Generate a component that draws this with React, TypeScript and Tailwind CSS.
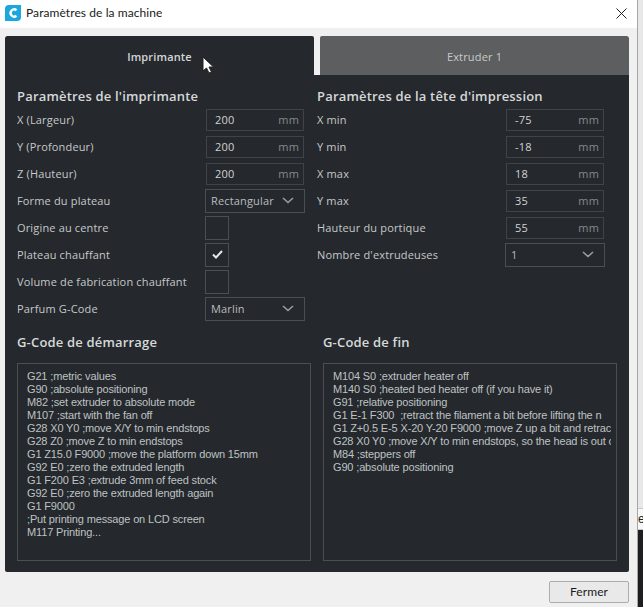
const Field = ({ label, value }: { label: string; value: string }) => (
  <div className="flex h-[27px] items-center justify-between">
    <span className="pt-[2px] text-[11px] tracking-[0.16px] text-[#c6c8c9]">{label}</span>
    <div className="mr-[1px] flex h-[22px] w-[98px] items-center justify-between border border-[#3f4447] pl-[8px] pr-[4px] pt-[2px] text-[11px] tracking-[0.16px]">
      <span className="text-[#d0d2d3]">{value}</span>
      <span className="text-[#85898b]">mm</span>
    </div>
  </div>
);

const Select = ({ label, value }: { label: string; value: string }) => (
  <div className="flex h-[27px] items-center justify-between">
    <span className="pt-[2px] text-[11px] tracking-[0.16px] text-[#c6c8c9]">{label}</span>
    <div className="flex h-[24px] w-[100px] items-center justify-between border border-[#4a4f52] pl-[5px] pr-[10px] text-[11px] tracking-[0.16px] text-[#b9bbbc]">
      <span className="pt-[2px]">{value}</span>
      <svg width="12" height="7" viewBox="0 0 12 7" fill="none" stroke="#9a9d9f" strokeWidth="1.6">
        <path d="M1 1l5 4.5L11 1" />
      </svg>
    </div>
  </div>
);

const Check = ({ label, checked }: { label: string; checked?: boolean }) => (
  <div className="flex h-[27px] items-center justify-between">
    <span className="pt-[2px] text-[11px] tracking-[0.16px] text-[#c6c8c9]">{label}</span>
    <div className="mr-[76px] flex h-[24px] w-[24px] items-center justify-center border border-[#4a4f52]">
      {checked && (
        <svg width="11" height="9" viewBox="0 0 11 9" fill="none" stroke="#e6e7e8" strokeWidth="2">
          <path d="M1 4.5l3 3L10 1" />
        </svg>
      )}
    </div>
  </div>
);

const startCode = [
  "G21 ;metric values",
  "G90 ;absolute positioning",
  "M82 ;set extruder to absolute mode",
  "M107 ;start with the fan off",
  "G28 X0 Y0 ;move X/Y to min endstops",
  "G28 Z0 ;move Z to min endstops",
  "G1 Z15.0 F9000 ;move the platform down 15mm",
  "G92 E0 ;zero the extruded length",
  "G1 F200 E3 ;extrude 3mm of feed stock",
  "G92 E0 ;zero the extruded length again",
  "G1 F9000",
  ";Put printing message on LCD screen",
  "M117 Printing...",
];

const endCode = [
  "M104 S0 ;extruder heater off",
  "M140 S0 ;heated bed heater off (if you have it)",
  "G91 ;relative positioning",
  "G1 E-1 F300  ;retract the filament a bit before lifting the n",
  "G1 Z+0.5 E-5 X-20 Y-20 F9000 ;move Z up a bit and retrac",
  "G28 X0 Y0 ;move X/Y to min endstops, so the head is out o",
  "M84 ;steppers off",
  "G90 ;absolute positioning",
];

const CodeBox = ({ lines }: { lines: string[] }) => (
  <div className="h-[198px] border border-[#4a4f52] pl-[9px] pr-[5px] pt-[6px]">
    <div className="h-full overflow-hidden">
      {lines.map((l) => (
        <div key={l} className="h-[13px] whitespace-pre font-['Liberation_Sans',sans-serif] text-[11px] leading-[13px] tracking-[-0.15px] text-[#bfc2c3]">
          {l}
        </div>
      ))}
    </div>
  </div>
);

export default function App() {
  return (
    <div className="flex h-[607px] w-[643px] overflow-hidden bg-[#f0f0f0] font-['Open_Sans',sans-serif]">
      <div className="flex h-full w-[637px] shrink-0 flex-col bg-[#f0f0f0]">
        <div className="flex h-[28px] shrink-0 items-center justify-between bg-white pb-[2px] pl-[5px] pr-[10px]">
          <div className="flex items-center gap-[5px]">
            <svg width="16" height="16" viewBox="0 0 16 16">
              <path d="M4 0h12v12a4 4 0 0 1-4 4H0V4a4 4 0 0 1 4-4z" fill="#1ba6dd" />
              <path d="M11.5 5.2A3.6 3.6 0 1 0 11.5 10.8" fill="none" stroke="#fff" strokeWidth="2.4" />
            </svg>
            <span className="font-['Lato',sans-serif] text-[12px] tracking-[0.08px] text-[#1a1a1a]">Paramètres de la machine</span>
          </div>
          <svg width="11" height="11" viewBox="0 0 11 11" stroke="#222" strokeWidth="1">
            <path d="M.5.5l10 10M10.5.5l-10 10" />
          </svg>
        </div>

        <div className="mx-[5px] mt-[8px] flex h-[536px] w-[624px] flex-col overflow-hidden rounded-[2px]">
          <div className="flex h-[39px] shrink-0 gap-[6px]">
            <div className="relative flex w-[309px] items-center justify-center rounded-t-[2px] bg-[#25292d] pt-[4px] text-[11px] font-semibold tracking-[0.16px] text-[#d4d6d7]">
              Imprimante
              <svg className="absolute left-[197px] top-[20px]" width="13" height="18" viewBox="0 0 13 18">
                <path d="M1 1v14l3.5-3 2.5 5 2.5-1-2.5-5h4.5z" fill="#fff" stroke="#222" strokeWidth="1" />
              </svg>
            </div>
            <div className="flex flex-1 items-center justify-center rounded-t-[2px] bg-[#5d5e5f] pt-[4px] text-[11px] tracking-[0.16px] text-[#c9caca]">
              Extruder 1
            </div>
          </div>

          <div className="flex flex-1 flex-col bg-[#25292d] px-[12px]">
            <div className="flex pt-[12px]">
              <div className="w-[288px]">
                <div className="mb-[1px] h-[18px] text-[13px] font-semibold leading-[18px] tracking-[0.18px] text-[#d6d8d9]">
                  Paramètres de l'imprimante
                </div>
                <Field label="X (Largeur)" value="200" />
                <Field label="Y (Profondeur)" value="200" />
                <Field label="Z (Hauteur)" value="200" />
                <Select label="Forme du plateau" value="Rectangular" />
                <Check label="Origine au centre" />
                <Check label="Plateau chauffant" checked />
                <Check label="Volume de fabrication chauffant" />
                <Select label="Parfum G-Code" value="Marlin" />
              </div>
              <div className="ml-[12px] w-[288px]">
                <div className="mb-[1px] h-[18px] text-[13px] font-semibold leading-[18px] tracking-[0.18px] text-[#d6d8d9]">
                  Paramètres de la tête d'impression
                </div>
                <Field label="X min" value="-75" />
                <Field label="Y min" value="-18" />
                <Field label="X max" value="18" />
                <Field label="Y max" value="35" />
                <Field label="Hauteur du portique" value="55" />
                <Select label="Nombre d'extrudeuses" value="1" />
              </div>
            </div>

            <div className="mt-[11px] flex gap-[12px]">
              <div className="w-[294px]">
                <div className="mb-[12px] h-[18px] text-[13px] font-semibold leading-[18px] tracking-[0.18px] text-[#d6d8d9]">G-Code de démarrage</div>
                <CodeBox lines={startCode} />
              </div>
              <div className="w-[294px]">
                <div className="mb-[12px] h-[18px] text-[13px] font-semibold leading-[18px] tracking-[0.18px] text-[#d6d8d9]">G-Code de fin</div>
                <CodeBox lines={endCode} />
              </div>
            </div>
          </div>
        </div>

        <div className="flex flex-1 items-start justify-end pr-[8px] pt-[9px]">
          <button className="h-[22px] w-[80px] rounded-[2px] border border-[#adadad] bg-[#e9e9e9] font-['Lato',sans-serif] text-[12px] tracking-[0.08px] text-[#1a1a1a]">
            Fermer
          </button>
        </div>
      </div>

      {/* window behind the dialog, only a sliver shows */}
      <div className="flex h-full flex-1 flex-col border-l border-[#a6a6a6]">
        <div className="h-[508px] bg-[#e8e8e8]" />
        <div className="flex h-[22px] items-center overflow-hidden border-y border-[#c9c9c9] bg-[#f7f7f7] font-['Liberation_Sans',sans-serif] text-[12px] text-[#222]">
          e
        </div>
        <div className="flex-1 bg-[#1d1e20]" />
      </div>
    </div>
  );
}
